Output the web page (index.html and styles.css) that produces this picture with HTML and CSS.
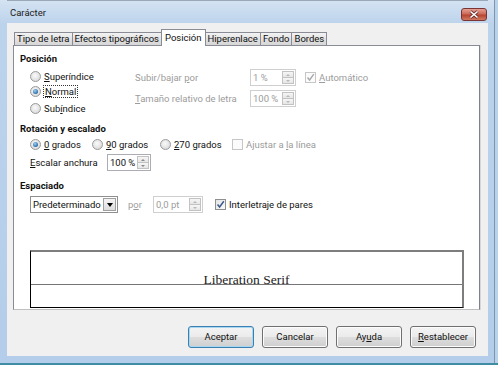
FILE: index.html
```html
<!DOCTYPE html>
<html lang="es">
<head>
    <meta charset="UTF-8">
    <title>Carácter</title>
    <link rel="stylesheet" href="styles.css">
</head>
<body>
<div class="window">
    <div class="titlebar">
        <span class="title">Carácter</span>
        <span class="close-btn">
            <svg width="12" height="9" viewBox="0 0 12 9"><path d="M2.5 1.5 L9.5 7.5 M9.5 1.5 L2.5 7.5" stroke="#6b2a2a" stroke-width="3"/><path d="M2.5 1.5 L9.5 7.5 M9.5 1.5 L2.5 7.5" stroke="#fff" stroke-width="1.6"/></svg>
        </span>
    </div>

    <div class="client">
        <div class="tabs">
            <span class="tab">Tipo de letra</span>
            <span class="tab">Efectos tipográficos</span>
            <span class="tab active">Posición</span>
            <span class="tab">Hiperenlace</span>
            <span class="tab">Fondo</span>
            <span class="tab">Bordes</span>
        </div>

        <div class="panel">
            <div class="heading">Posición</div>
            <div class="pos-section">
                <div class="radio-col">
                    <div class="opt"><span class="radio"></span><span class="txt"><u>S</u>uperíndice</span></div>
                    <div class="opt"><span class="radio on"></span><span class="txt focus"><u>N</u>ormal</span></div>
                    <div class="opt sub"><span class="radio"></span><span class="txt">Sub<u>í</u>ndice</span></div>
                </div>
                <div class="pos-grid">
                    <span class="lbl off">Subir/bajar <u>p</u>or</span>
                    <div class="spin off"><span class="val">1 %</span><span class="spin-btns"><span class="half"><span class="arr up"></span></span><span class="half"><span class="arr down"></span></span></span></div>
                    <div class="opt off"><span class="check on"><svg width="9" height="9" viewBox="0 0 9 9"><path d="M1.5 4.5 L3.6 7 L7.8 1.2" fill="none" stroke="#a8a8a8" stroke-width="1.4"/></svg></span><span class="txt"><u>A</u>utomático</span></div>
                    <span class="lbl off"><u>T</u>amaño relativo de letra</span>
                    <div class="spin off"><span class="val">100 %</span><span class="spin-btns"><span class="half"><span class="arr up"></span></span><span class="half"><span class="arr down"></span></span></span></div>
                </div>
            </div>

            <div class="heading rot-head">Rotación y escalado</div>
            <div class="row rot-row">
                <div class="opt deg0"><span class="radio on"></span><span class="txt"><u>0</u> grados</span></div>
                <div class="opt deg90"><span class="radio"></span><span class="txt"><u>9</u>0 grados</span></div>
                <div class="opt deg270"><span class="radio"></span><span class="txt"><u>2</u>70 grados</span></div>
                <div class="opt off"><span class="check"></span><span class="txt">Ajustar a <u>l</u>a línea</span></div>
            </div>
            <div class="row scale-row">
                <span class="lbl scale-lbl"><u>E</u>scalar anchura</span>
                <div class="spin scale-spin"><span class="val">100 %</span><span class="spin-btns"><span class="half"><span class="arr up"></span></span><span class="half"><span class="arr down"></span></span></span></div>
            </div>

            <div class="heading space-head">Espaciado</div>
            <div class="row space-row">
                <div class="combo"><span class="val">Predeterminado</span><span class="combo-btn"><span class="arr down dark"></span></span></div>
                <span class="lbl off por">p<u>o</u>r</span>
                <div class="spin off pt-spin"><span class="val">0,0 pt</span><span class="spin-btns"><span class="half"><span class="arr up"></span></span><span class="half"><span class="arr down"></span></span></span></div>
                <div class="opt kern"><span class="check on"><svg width="9" height="9" viewBox="0 0 9 9"><path d="M1.5 4.5 L3.6 7 L7.8 1.2" fill="none" stroke="#3d5a8c" stroke-width="1.5"/></svg></span><span class="txt">Interletraje de pares</span></div>
            </div>

            <div class="preview">
                <div class="preview-top"><span class="sample">Liberation Serif</span></div>
                <div class="preview-bottom"></div>
            </div>
        </div>

        <div class="buttons">
            <span class="btn default">Aceptar</span>
            <span class="btn">Cancelar</span>
            <span class="btn">Ay<u>u</u>da</span>
            <span class="btn"><u>R</u>establecer</span>
        </div>
    </div>
</div>
</body>
</html>
```

FILE: styles.css
```css
:root {
    --frame: #b5cfea;
    --client: #f0f0f0;
    --border: #898c95;
    --disabled: #9c9c9c;
}

body {
    margin: 0;
    font-family: Roboto, "Noto Sans", sans-serif;
    font-size: 9.5px;
    color: #111;
    background: var(--frame);
}

u {
    text-decoration-thickness: 1px;
    text-underline-offset: 1px;
}

.window {
    width: 498px;
    height: 365px;
    box-sizing: border-box;
    padding: 0 10px 7px 7px;
    display: flex;
    flex-direction: column;
    background: linear-gradient(to bottom, #d5e3f2 0, #bcd3ec 24px, #b3cdea 100%);
    border-bottom: 2px solid #3f8ca3;
    box-shadow: inset -3px 0 0 #b9d2ec, inset -4px 0 0 #7f95ab;
}

.titlebar {
    height: 23px;
    display: flex;
    align-items: flex-start;
    border-top: 1px solid #9aa8b8;
    box-sizing: border-box;
}

.title {
    margin: 6px 0 0 3px;
    font-size: 9.5px;
    color: #1b1b1b;
}

.close-btn {
    margin: 7px 1px 0 auto;
    width: 26px;
    height: 13px;
    box-sizing: border-box;
    display: flex;
    align-items: center;
    justify-content: center;
    border: 1px solid #7a3434;
    border-radius: 3px;
    background: linear-gradient(to bottom, #e4a192 0, #cd6a5a 45%, #b8442f 55%, #cf7a62 100%);
}

.client {
    flex: 1;
    background: var(--client);
    display: flex;
    flex-direction: column;
    padding: 6px 8px 0 6px;
}

/* pestañas */
.tabs {
    display: flex;
    align-items: flex-end;
    height: 16px;
    padding-left: 1px;
    position: relative;
    z-index: 1;
}

.tab {
    height: 13px;
    line-height: 12px;
    padding: 0 2px;
    border: 1px solid var(--border);
    border-bottom: none;
    margin-right: -1px;
    background: linear-gradient(to bottom, #f3f3f3, #e2e2e2 50%, #d6d6d6);
    box-sizing: border-box;
    white-space: nowrap;
}

.tab.active {
    height: 17px;
    line-height: 15px;
    margin-bottom: -1px;
    background: #fff;
    padding: 0 3px;
}

.panel {
    flex: 1;
    background: #fff;
    border: 1px solid var(--border);
    border-bottom-color: #c0c0c0;
    border-right-color: #7e8189;
    padding: 0 0 0 6px;
    box-shadow: 1px 0 0 #d6d6d6;
}

.heading {
    font-weight: bold;
    line-height: 14px;
    margin-top: 6px;
}

.pos-section {
    display: flex;
    margin-top: 3px;
    padding-left: 10px;
}

.radio-col {
    width: 105px;
}

.radio-col .opt {
    height: 15px;
}

.radio-col .opt.sub {
    margin-top: 2px;
}

.opt {
    display: flex;
    align-items: center;
    gap: 3px;
    white-space: nowrap;
}

.opt.off,
.lbl.off {
    color: var(--disabled);
}

.txt.focus {
    outline: 1px dotted #333;
    outline-offset: 0;
    padding: 0 1px;
}

.radio {
    width: 11px;
    height: 11px;
    flex: none;
    box-sizing: border-box;
    border-radius: 50%;
    border: 1px solid #9a9a9a;
    background: radial-gradient(circle at 45% 40%, #fafafa 0, #e8e8e8 45%, #cfcfcf 100%);
    display: flex;
    align-items: center;
    justify-content: center;
}

.radio.on::after {
    content: "";
    width: 5px;
    height: 5px;
    border-radius: 50%;
    background: radial-gradient(circle at 40% 35%, #9fd0f2, #2c6eaa 70%, #1d4d80);
}

.check {
    width: 11px;
    height: 11px;
    flex: none;
    box-sizing: border-box;
    border: 1px solid #8e8f8f;
    background: linear-gradient(135deg, #e4e4e4, #fafafa);
    display: flex;
    align-items: center;
    justify-content: center;
}

.opt.off .check {
    border-color: #c6c6c6;
    background: #fbfbfb;
}

.pos-grid {
    display: grid;
    grid-template-columns: 115px 46px auto;
    grid-template-rows: 17px 17px;
    row-gap: 4px;
    align-items: center;
}

.pos-grid .opt {
    margin-left: 9px;
}

/* campos numéricos */
.spin {
    height: 17px;
    box-sizing: border-box;
    display: flex;
    border: 1px solid #abadb3;
    background: #fff;
}

.spin.off {
    border-color: #cfcfcf;
    color: var(--disabled);
}

.spin .val {
    flex: 1;
    line-height: 15px;
    padding-left: 2px;
    white-space: nowrap;
}

.spin-btns {
    width: 12px;
    margin: 1px;
    display: flex;
    flex-direction: column;
}

.half {
    flex: 1;
    border: 1px solid #c2c2c2;
    background: linear-gradient(to bottom, #f6f6f6, #e6e6e6);
    display: flex;
    align-items: center;
    justify-content: center;
}

.half + .half {
    border-top: none;
}

.arr {
    width: 0;
    height: 0;
    border-left: 2.5px solid transparent;
    border-right: 2.5px solid transparent;
}

.arr.up {
    border-bottom: 2px solid #8a8a8a;
}

.arr.down {
    border-top: 2px solid #8a8a8a;
}

.spin.off .arr.up {
    border-bottom-color: #b8b8b8;
}

.spin.off .arr.down {
    border-top-color: #b8b8b8;
}

.arr.down.dark {
    border-left-width: 3.5px;
    border-right-width: 3.5px;
    border-top: 4px solid #000;
}

.row {
    display: flex;
    align-items: center;
    padding-left: 10px;
}

.rot-head {
    margin-top: 6px;
}

.rot-row {
    height: 16px;
}

.deg0 { width: 62px; }
.deg90 { width: 68px; }
.deg270 { width: 72px; }

.scale-row {
    margin-top: 2px;
    height: 17px;
}

.scale-lbl {
    width: 77px;
}

.scale-spin {
    width: 44px;
}

.space-head {
    margin-top: 8px;
}

.space-row {
    margin-top: 3px;
    height: 17px;
}

.combo {
    width: 88px;
    height: 17px;
    box-sizing: border-box;
    display: flex;
    border: 1px solid #8e8f8f;
    background: #fff;
}

.combo .val {
    flex: 1;
    line-height: 15px;
    padding-left: 2px;
}

.combo-btn {
    width: 11px;
    margin: 1px;
    border: 1px solid #a0a0a0;
    background: linear-gradient(to bottom, #f4f4f4, #dcdcdc);
    display: flex;
    align-items: center;
    justify-content: center;
}

.por {
    width: 25px;
    margin-left: 10px;
}

.pt-spin {
    width: 50px;
}

.kern {
    margin-left: 12px;
}

/* vista previa */
.preview {
    margin: 37px 0 0 10px;
    width: 434px;
    height: 58px;
    box-sizing: border-box;
    border: 1px solid #000;
    border-top: 2px solid #7d7d7d;
    border-right: 2px solid #7d7d7d;
    display: flex;
    flex-direction: column;
}

.preview-top {
    height: 32px;
    border-bottom: 1px solid #767676;
    display: flex;
    align-items: flex-end;
    justify-content: center;
}

.sample {
    font-family: "Liberation Serif", serif;
    font-size: 13.5px;
    line-height: 13px;
    margin-bottom: -2px;
    color: #222;
}

/* botones */
.buttons {
    display: flex;
    justify-content: flex-end;
    gap: 8px;
    margin: 16px 4px 8px 0;
}

.btn {
    width: 66px;
    height: 22px;
    box-sizing: border-box;
    line-height: 20px;
    text-align: center;
    border: 1px solid #707070;
    border-radius: 3px;
    background: linear-gradient(to bottom, #f4f4f4 0, #ebebeb 48%, #dddddd 52%, #cfcfcf 100%);
    box-shadow: inset 0 0 0 1px #fcfcfc;
}

.btn.default {
    border-color: #3c7fb1;
    box-shadow: inset 0 0 0 1px #a6d7f3;
}
```
